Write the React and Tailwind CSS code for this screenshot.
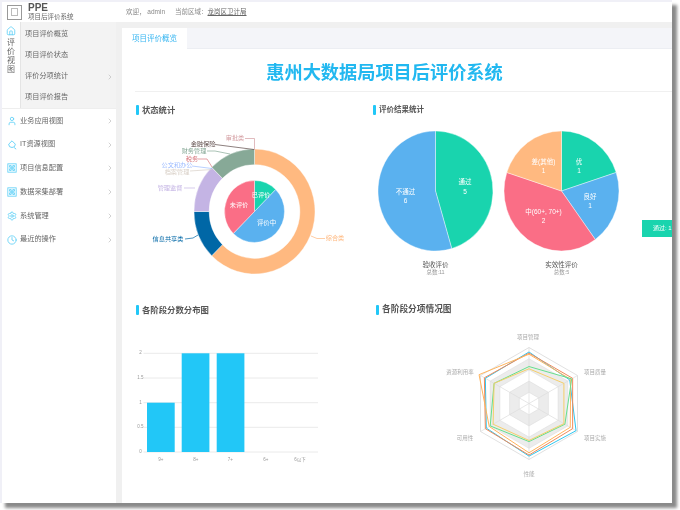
import React from "react";
import { User, ChevronRight, Settings, Clock, House } from "lucide-react";

const FONT = '"Liberation Sans","Noto Sans CJK SC",sans-serif';

function pt(cx, cy, rx, ry, deg) {
  const a = (deg * Math.PI) / 180;
  return [cx + rx * Math.sin(a), cy - ry * Math.cos(a)];
}

function Sector({ cx, cy, rx, ry, ir = 0, from, to, fill }) {
  const irx = rx * ir;
  const iry = ry * ir;
  const [x1, y1] = pt(cx, cy, rx, ry, from);
  const [x2, y2] = pt(cx, cy, rx, ry, to);
  const large = to - from > 180 ? 1 : 0;
  let d;
  if (ir > 0) {
    const [x3, y3] = pt(cx, cy, irx, iry, to);
    const [x4, y4] = pt(cx, cy, irx, iry, from);
    d = `M${x1} ${y1}A${rx} ${ry} 0 ${large} 1 ${x2} ${y2}L${x3} ${y3}A${irx} ${iry} 0 ${large} 0 ${x4} ${y4}Z`;
  } else {
    d = `M${cx} ${cy}L${x1} ${y1}A${rx} ${ry} 0 ${large} 1 ${x2} ${y2}Z`;
  }
  return <path d={d} fill={fill} stroke="#fff" strokeWidth="0.4" />;
}

function Label({ x, y, fill = "#fff", size = 6.5, children, anchor = "middle" }) {
  return (
    <text x={x} y={y} fill={fill} fontSize={size} textAnchor={anchor} dominantBaseline="middle" fontFamily={FONT}>
      {children}
    </text>
  );
}

function SectionTitle({ children, className }) {
  return (
    <div className={`flex items-center gap-[3px] text-[#555] font-bold ${className}`}>
      <span className="w-[3px] h-[10px] bg-[#22c7f7] rounded-[1px]" />
      <span>{children}</span>
    </div>
  );
}

function Donut() {
  const cx = 254.5, cy = 211.5;
  const callouts = [
    ["审批类", 235, 138, "#d49ea2", "254.5,150 254.5,138.5 245,138.5"],
    ["金融保险", 203, 144.5, "#5b4947", "215,144.5 254,149.5"],
    ["财务管理", 194, 151, "#87a997", "207,151 215,151 230,154"],
    ["税务", 192, 159, "#d87a80", "198,159 207,159 212,167"],
    ["公文和办公", 177, 165, "#9cbbff", "192,166 212,168.5"],
    ["档案管理", 177, 172, "#d9d0c7", "190,171 212,169.5"],
    ["管理监督", 170, 188, "#c4b4e4", "184,188 195,188"],
    ["信息共享类", 168, 239, "#0067a6", "185,239 193,238 198,235"],
    ["综合类", 335, 238.5, "#ffb980", "311,236 317,238.5 325,238.5"],
  ];
  return (
    <svg viewBox="130 122 238 164" width="238" height="164" className="block">
      <Sector cx={cx} cy={cy} rx={60.5} ry={62.5} ir={0.75} from={0} to={225} fill="#ffb980" />
      <Sector cx={cx} cy={cy} rx={60.5} ry={62.5} ir={0.75} from={225} to={270} fill="#0067a6" />
      <Sector cx={cx} cy={cy} rx={60.5} ry={62.5} ir={0.75} from={270} to={315} fill="#c4b4e4" />
      <Sector cx={cx} cy={cy} rx={60.5} ry={62.5} ir={0.75} from={315} to={360} fill="#87a997" />
      <Sector cx={cx} cy={cy} rx={30} ry={31} from={0} to={45} fill="#19d4ae" />
      <Sector cx={cx} cy={cy} rx={30} ry={31} from={45} to={225} fill="#5ab1ef" />
      <Sector cx={cx} cy={cy} rx={30} ry={31} from={225} to={360} fill="#fa6e86" />
      {callouts.map(([t, x, y, c, pts]) => (
        <g key={t}>
          <polyline points={pts} fill="none" stroke={c} strokeWidth="0.7" />
          <Label x={x} y={y} fill={c} size={6.2}>{t}</Label>
        </g>
      ))}
      <Label x={261} y={195.5} size={6.2}>已评价</Label>
      <Label x={239} y={205} size={6.2}>未评价</Label>
      <Label x={266.5} y={223.5} size={6.4}>评价中</Label>
    </svg>
  );
}

function Pies() {
  const cy = 191;
  const a = { cx: 435.5, cy, rx: 57.5, ry: 60 };
  const b = { cx: 561.5, cy, rx: 57.5, ry: 60 };
  return (
    <svg viewBox="373 122 299 164" width="299" height="164" className="block">
      <Sector {...a} from={0} to={163.6} fill="#19d4ae" />
      <Sector {...a} from={163.6} to={360} fill="#5ab1ef" />
      <Sector {...b} from={0} to={72} fill="#19d4ae" />
      <Sector {...b} from={72} to={144} fill="#5ab1ef" />
      <Sector {...b} from={144} to={288} fill="#fa6e86" />
      <Sector {...b} from={288} to={360} fill="#ffb980" />
      <Label x={465} y={182.5}>通过</Label><Label x={465} y={192}>5</Label>
      <Label x={405.5} y={192}>不通过</Label><Label x={405.5} y={201}>6</Label>
      <Label x={579} y={162}>优</Label><Label x={579} y={171}>1</Label>
      <Label x={590} y={197}>良好</Label><Label x={590} y={206}>1</Label>
      <Label x={543.5} y={212.5}>中(60+, 70+)</Label><Label x={543.5} y={221.5}>2</Label>
      <Label x={543.5} y={162}>差(其他)</Label><Label x={543.5} y={171}>1</Label>
      <Label x={435.5} y={265.5} fill="#555">验收评价</Label>
      <Label x={435.5} y={273} fill="#999" size={5.5}>总数:11</Label>
      <Label x={561.5} y={265.5} fill="#555">实效性评价</Label>
      <Label x={561.5} y={273} fill="#999" size={5.5}>总数:5</Label>
    </svg>
  );
}

function Bars() {
  const grid = [353.3, 378, 402.7, 427.3, 452];
  const yl = ["2", "1.5", "1", "0.5", "0"];
  const bars = [[147, 402.7], [181.7, 353.3], [216.7, 353.3]];
  const xl = [[160.7, "9+"], [195.7, "8+"], [230.3, "7+"], [265.7, "6+"], [300, "6以下"]];
  return (
    <svg viewBox="130 322 238 150" width="238" height="150" className="block">
      {grid.map((y, i) => (
        <g key={y}>
          <line x1="143.5" x2="318" y1={y} y2={y} stroke="#e8e8e8" strokeWidth="0.9" />
          <Label x={140.5} y={y} fill="#999" size={4.5}>{yl[i]}</Label>
        </g>
      ))}
      {bars.map(([x, y]) => (
        <rect key={x} x={x} y={y} width="27.7" height={452 - y} fill="#22c7f7" />
      ))}
      {xl.map(([x, t]) => (
        <Label key={t} x={x} y={459.5} fill="#999" size={4.5}>{t}</Label>
      ))}
    </svg>
  );
}

function Radar() {
  const cx = 529, cy = 403.5, R = 56;
  const angles = [0, 60, 120, 180, 240, 300];
  const hex = (f) => angles.map((d) => pt(cx, cy, R * f, R * f, d).join(",")).join(" ");
  const series = [
    ["#2ec7f0", [0.92, 0.84, 0.97, 0.94, 0.88, 0.9]],
    ["#f08a5a", [0.9, 0.9, 0.9, 0.92, 0.9, 0.92]],
    ["#ffb45c", [0.88, 0.86, 0.85, 0.88, 0.82, 1.03]],
    ["#66e08c", [0.66, 0.88, 0.74, 0.68, 0.8, 0.72]],
    ["#f5cf6a", [0.62, 0.72, 0.72, 0.66, 0.74, 0.72]],
  ];
  const labels = [
    ["项目管理", 528, 338],
    ["项目质量", 595, 373],
    ["项目实施", 595, 439],
    ["性能", 529, 475],
    ["可用性", 465, 439],
    ["资源利用率", 460, 373],
  ];
  return (
    <svg viewBox="373 322 299 160" width="299" height="160" className="block">
      <polygon points={hex(1)} fill="#fff" stroke="#ddd" strokeWidth="0.9" />
      <polygon points={hex(0.8)} fill="#ececec" stroke="#ddd" strokeWidth="0.6" />
      <polygon points={hex(0.6)} fill="#fff" stroke="#ddd" strokeWidth="0.6" />
      <polygon points={hex(0.4)} fill="#ececec" stroke="#ddd" strokeWidth="0.6" />
      <polygon points={hex(0.2)} fill="#fff" stroke="#ddd" strokeWidth="0.6" />
      {angles.map((d) => {
        const [x, y] = pt(cx, cy, R, R, d);
        return <line key={d} x1={cx} y1={cy} x2={x} y2={y} stroke="#ddd" strokeWidth="0.7" />;
      })}
      {series.map(([c, v]) => (
        <polygon
          key={c}
          points={v.map((f, i) => pt(cx, cy, R * f, R * f, angles[i]).join(",")).join(" ")}
          fill="none"
          stroke={c}
          strokeWidth="1"
        />
      ))}
      {labels.map(([t, x, y]) => (
        <Label key={t} x={x} y={y} fill="#aaa" size={5.5}>{t}</Label>
      ))}
    </svg>
  );
}

function GridIcon() {
  return (
    <svg viewBox="0 0 12 12" width="10" height="10" fill="none" stroke="#5fd0f7" strokeWidth="1" className="shrink-0">
      <rect x="1" y="1" width="10" height="10" />
      <path d="M3 3h2v2H3zM7 3h2v2H7zM3 7h2v2H3zM7 7h2v2H7zM5 5h2v2H5z" />
    </svg>
  );
}

function CloudIcon() {
  return (
    <svg viewBox="0 0 12 12" width="10" height="10" fill="none" stroke="#5fd0f7" strokeWidth="1.1" className="shrink-0">
      <path d="M6 1L10 5A4 4 0 1 1 2 5Z" strokeLinejoin="round" />
      <path d="M8.5 9L11 11" />
    </svg>
  );
}

const menu = [
  [<User key="u" size={10} color="#5fd0f7" className="shrink-0" />, "业务应用视图"],
  [<CloudIcon key="c" />, "IT资源视图"],
  [<GridIcon key="g1" />, "项目信息配置"],
  [<GridIcon key="g2" />, "数据采集部署"],
  [<Settings key="s" size={10} color="#5fd0f7" className="shrink-0" />, "系统管理"],
  [<Clock key="k" size={10} color="#5fd0f7" className="shrink-0" />, "最近的操作"],
];

export default function App() {
  return (
    <div className="w-[680px] h-[510px] bg-white overflow-hidden" style={{ fontFamily: FONT }}>
      <div className="w-[672px] h-[503px] border-l-2 border-t-2 border-[#f0f0f7] bg-white flex shadow-[5px_5px_3px_#8a8a8a] blur-[0.3px]">
        <aside className="w-[114px] shrink-0 flex flex-col bg-white">
          <div className="h-[20px] flex items-center pl-[5px] gap-[6px] shrink-0">
            <div className="w-[15px] h-[15px] border border-[#999] flex items-center justify-center">
              <div className="w-[7px] h-[8px] border border-[#bbb]" />
            </div>
            <div className="flex flex-col">
              <span className="text-[10px] leading-[10px] font-bold text-[#555]">PPE</span>
              <span className="text-[6.5px] leading-[8px] text-[#666]">项目后评价系统</span>
            </div>
          </div>
          <div className="flex h-[86px] shrink-0">
            <div className="w-[18px] flex flex-col items-center pt-[4px] bg-white">
              <House size={10} color="#5fd0f7" />
              <div className="mt-[2px] w-[9px] text-[8px] leading-[9px] text-[#666] text-center">评价视图</div>
            </div>
            <div className="flex-1 bg-[#f3f3f3] border-l border-[#e4e4e4] flex flex-col pt-[2px]">
              {["项目评价概览", "项目评价状态", "评价分项统计", "项目评价报告"].map((t, i) => (
                <div key={t} className="h-[21.5px] flex items-center justify-between pl-[4px] pr-[2px] text-[7.2px] text-[#666]">
                  <span>{t}</span>
                  {i === 2 && <ChevronRight size={8} color="#bbb" />}
                </div>
              ))}
            </div>
          </div>
          <div className="h-[1px] bg-[#eee] shrink-0" />
          <div className="flex flex-col">
            {menu.map(([icon, t]) => (
              <div key={t} className="h-[23.8px] flex items-center pl-[5px] pr-[2px] gap-[3px] text-[7.2px] text-[#666]">
                {icon}
                <span className="flex-1">{t}</span>
                <ChevronRight size={8} color="#bbb" />
              </div>
            ))}
          </div>
        </aside>
        <div className="flex-1 min-w-0 flex flex-col bg-[#f0f0f0]">
          <div className="h-[20px] bg-white flex items-center pl-[10px] text-[6.5px] text-[#888] shrink-0">
            <span>欢迎， admin</span>
            <span className="ml-[10px]">当前区域：</span>
            <span className="underline text-[#666]">龙岗区卫计局</span>
          </div>
          <div className="flex-1 min-h-0 mt-[6px] ml-[6px] bg-white flex flex-col relative overflow-hidden">
            <div className="h-[21px] bg-[#f4f5f9] border-b border-[#eceef3] flex shrink-0">
              <div className="w-[65px] h-[21px] bg-white flex items-center justify-center text-[7.5px] text-[#38b6f1]">项目评价概览</div>
            </div>
            <h1 className="h-[42px] flex items-center justify-center text-[18.2px] font-bold text-[#22b8f0] shrink-0 pr-[25px] pt-[7px]">惠州大数据局项目后评价系统</h1>
            <div className="h-[1px] bg-[#f0f0f0] ml-[13px] shrink-0" />
            <div className="grid grid-cols-[243px_1fr] ml-[8px] pt-[13px]">
              <div className="min-w-0">
                <SectionTitle className="text-[8.3px] h-[10px] pl-[6px]">状态统计</SectionTitle>
                <div className="mt-[7px]"><Donut /></div>
              </div>
              <div className="min-w-0">
                <SectionTitle className="text-[7.5px] h-[10px]">评价结果统计</SectionTitle>
                <div className="mt-[7px]"><Pies /></div>
              </div>
              <div className="min-w-0 mt-[19px]">
                <SectionTitle className="text-[8.4px] h-[10px] pl-[6px]">各阶段分数分布图</SectionTitle>
                <div className="mt-[7px]"><Bars /></div>
              </div>
              <div className="min-w-0 mt-[19px]">
                <SectionTitle className="text-[8.7px] h-[10px] pl-[3px]">各阶段分项情况图</SectionTitle>
                <div className="mt-[7px]"><Radar /></div>
              </div>
            </div>
            <div className="absolute right-0 top-[192px] w-[30px] h-[17px] bg-[#19d4ae] text-white text-[6px] flex items-center pl-[11px] whitespace-nowrap">通过: 1</div>
          </div>
        </div>
      </div>
    </div>
  );
}
